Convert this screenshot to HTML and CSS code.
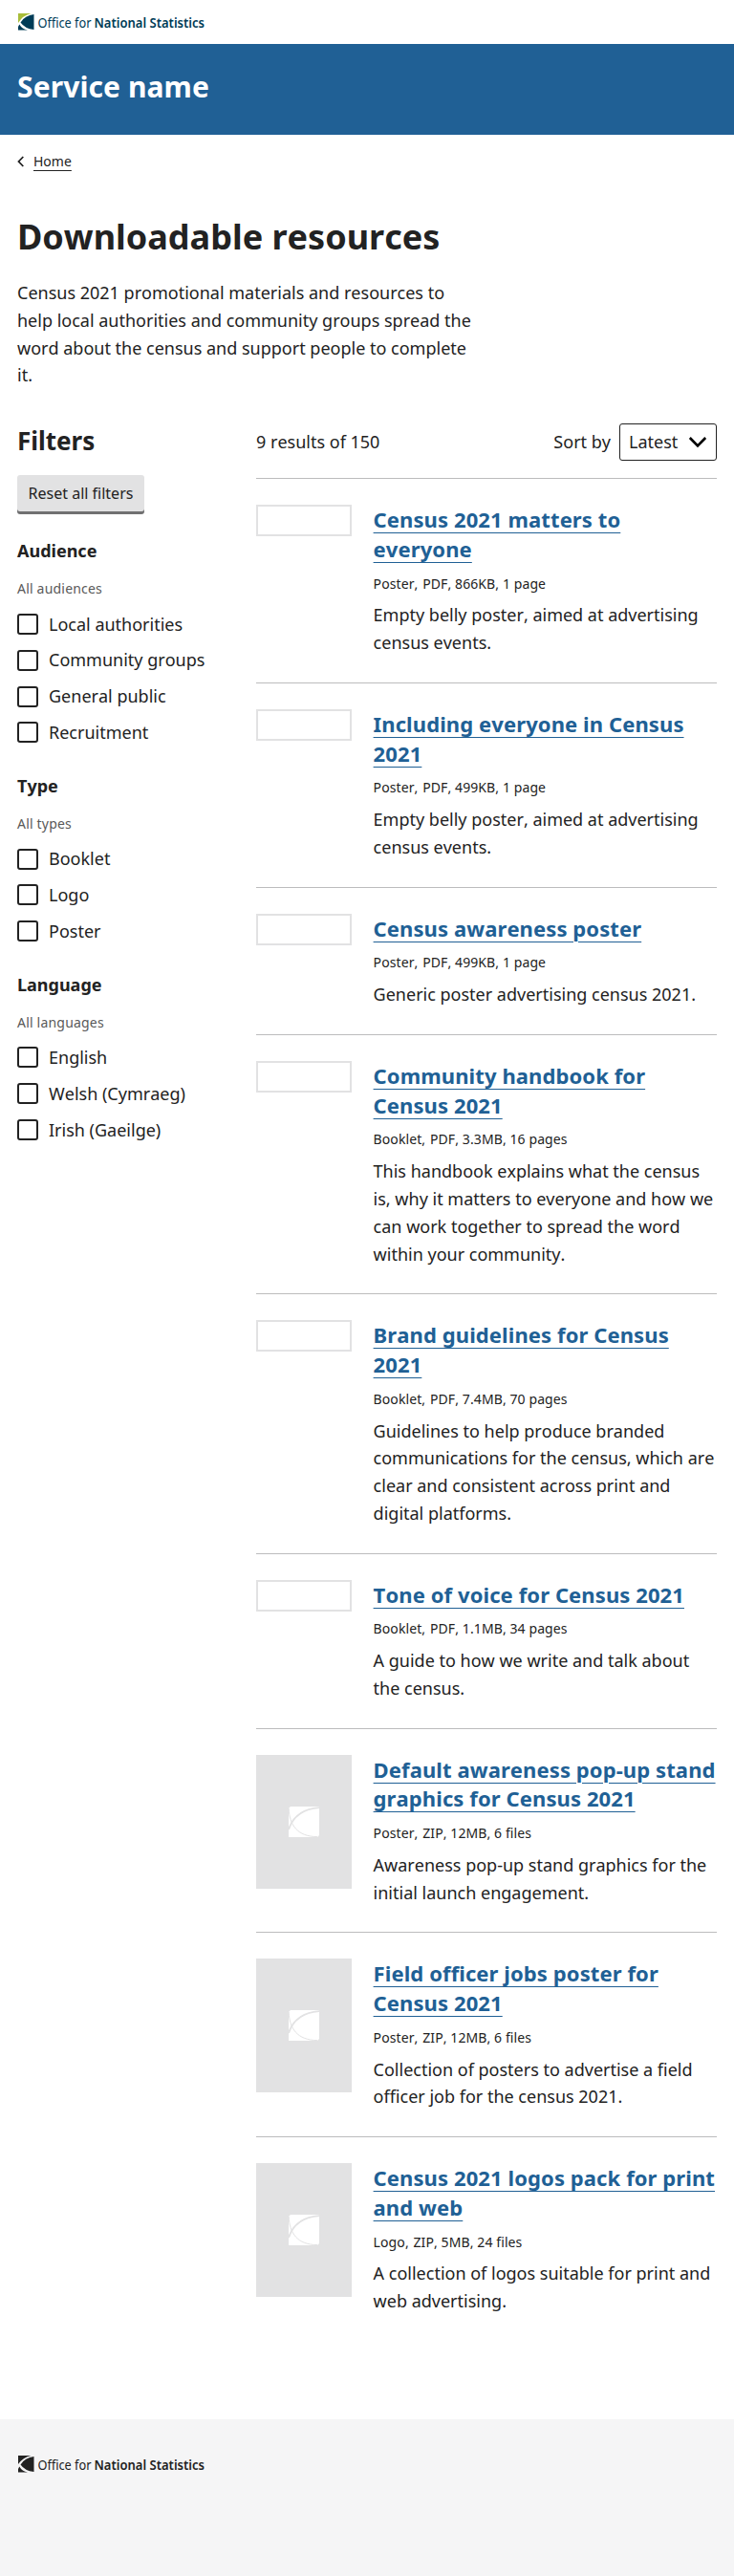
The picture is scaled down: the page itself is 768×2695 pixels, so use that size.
FILE: index.html
```html
<!DOCTYPE html>
<html lang="en">
<head>
<meta charset="utf-8">
<title>Downloadable resources</title>
<link rel="stylesheet" href="styles.css">
</head>
<body>
<svg class="defs" width="0" height="0" aria-hidden="true">
  <symbol id="placeholder" viewBox="0 0 32 32">
    <path fill="#fff" d="M2 0H32V30L30 32H0V2Z"/>
    <path fill="none" stroke="#e2e2e3" stroke-width="1.900" d="M33 1.100C17 2 5 9 0 24"/>
    <path fill="none" stroke="#e2e2e3" stroke-width="1" d="M0.200 2C0.800 19 9 31.500 30 31.600"/>
  </symbol>
</svg>
<header>
  <div class="topbar">
    <svg class="logo" width="200" height="24" viewBox="0 0 200 24" role="img" aria-label="Office for National Statistics">
      <path fill="#a8bd3a" d="M1 3H14.500Q6 5 1 13Z"/>
      <path fill="#003c57" d="M17.500 4V20Q8 19 3.500 12.500Q8 5 17.500 4Z"/>
      <path fill="#003c57" d="M2.300 14.500Q5 19.500 11 20.600H1V17Z"/>
      <text class="logo-text" transform="translate(21.500 17.500) scale(.85 1)">Office for</text>
      <text class="logo-text strong" transform="translate(80.500 17.500) scale(.87 1)">National Statistics</text>
    </svg>
  </div>
  <div class="band"><div class="service">Service name</div></div>
</header>
<nav class="crumbs">
  <svg width="8" height="12" viewBox="0 0 8 12"><path d="M6.300 1L1.500 6L6.300 11" fill="none" stroke="#222" stroke-width="1.800"/></svg>
  <a href="#">Home</a>
</nav>
<main>
  <h1>Downloadable resources</h1>
  <p class="lead">Census 2021 promotional materials and resources to<br>help local authorities and community groups spread the word about the census and support people to complete it.</p>
  <div class="columns">
    <aside>
      <h2 class="filters-title">Filters</h2>
      <button class="reset">Reset all filters</button>
      <section class="group">
        <h3>Audience</h3>
        <p class="all">All audiences</p>
        <label><i></i>Local authorities</label>
        <label><i></i>Community groups</label>
        <label><i></i>General public</label>
        <label><i></i>Recruitment</label>
      </section>
      <section class="group">
        <h3>Type</h3>
        <p class="all">All types</p>
        <label><i></i>Booklet</label>
        <label><i></i>Logo</label>
        <label><i></i>Poster</label>
      </section>
      <section class="group">
        <h3>Language</h3>
        <p class="all">All languages</p>
        <label><i></i>English</label>
        <label><i></i>Welsh (Cymraeg)</label>
        <label><i></i>Irish (Gaeilge)</label>
      </section>
    </aside>
    <div class="results">
      <div class="bar">
        <span>9 results of 150</span>
        <span class="sort">Sort by
          <span class="select">Latest
            <svg width="20" height="14" viewBox="0 0 20 14"><path d="M1.800 2L10 10.500L18.200 2" fill="none" stroke="#000" stroke-width="2.600"/></svg>
          </span>
        </span>
      </div>
      <article><div class="thumb"></div><div><h2><a href="#">Census 2021 matters to everyone</a></h2><p class="meta">Poster, <span>PDF, 866KB, 1 page</span></p><p>Empty belly poster, aimed at advertising census events.</p></div></article>
      <article><div class="thumb"></div><div><h2><a href="#">Including everyone in Census 2021</a></h2><p class="meta">Poster, <span>PDF, 499KB, 1 page</span></p><p>Empty belly poster, aimed at advertising census events.</p></div></article>
      <article><div class="thumb"></div><div><h2><a href="#">Census awareness poster</a></h2><p class="meta">Poster, <span>PDF, 499KB, 1 page</span></p><p>Generic poster advertising census 2021.</p></div></article>
      <article><div class="thumb"></div><div><h2><a href="#">Community handbook for Census 2021</a></h2><p class="meta">Booklet, <span>PDF, 3.3MB, 16 pages</span></p><p>This handbook explains what the census is, why it matters to everyone and how we can work together to spread the word within your community.</p></div></article>
      <article><div class="thumb"></div><div><h2><a href="#">Brand guidelines for Census 2021</a></h2><p class="meta">Booklet, <span>PDF, 7.4MB, 70 pages</span></p><p>Guidelines to help produce branded communications for the census, which are clear and consistent across print and digital platforms.</p></div></article>
      <article><div class="thumb"></div><div><h2><a href="#">Tone of voice for Census 2021</a></h2><p class="meta">Booklet, <span>PDF, 1.1MB, 34 pages</span></p><p>A guide to how we write and talk about the census.</p></div></article>
      <article><div class="thumb blank"><svg width="32" height="32"><use href="#placeholder"/></svg></div><div><h2><a href="#">Default awareness pop-up stand graphics for Census 2021</a></h2><p class="meta">Poster, <span>ZIP, 12MB, 6 files</span></p><p>Awareness pop-up stand graphics for the initial launch engagement.</p></div></article>
      <article><div class="thumb blank"><svg width="32" height="32"><use href="#placeholder"/></svg></div><div><h2><a href="#">Field officer jobs poster for Census 2021</a></h2><p class="meta">Poster, <span>ZIP, 12MB, 6 files</span></p><p>Collection of posters to advertise a field officer job for the census 2021.</p></div></article>
      <article><div class="thumb blank"><svg width="32" height="32"><use href="#placeholder"/></svg></div><div><h2><a href="#">Census 2021 logos pack for print and web</a></h2><p class="meta">Logo, <span>ZIP, 5MB, 24 files</span></p><p>A collection of logos suitable for print and web advertising.</p></div></article>
    </div>
  </div>
</main>
<footer>
  <svg class="logo mono" width="200" height="24" viewBox="0 0 200 24" role="img" aria-label="Office for National Statistics">
    <path d="M1 3H14.500Q6 5 1 12Z"/>
    <path d="M17.500 4V20Q8 19 3.500 12.500Q8 5 17.500 4Z"/>
    <path d="M2.300 14.500Q5 19.500 11 20.600H1V17Z"/>
    <text class="logo-text" transform="translate(21.500 17.500) scale(.85 1)">Office for</text>
    <text class="logo-text strong" transform="translate(80.500 17.500) scale(.87 1)">National Statistics</text>
  </svg>
</footer>
</body>
</html>
```
FILE: styles.css
```css
* { box-sizing: border-box; }
body {
  margin: 0;
  min-height: 2695px;
  display: flex;
  flex-direction: column;
  font: 18px/28.8px "Noto Sans", sans-serif;
  font-kerning: none;
  color: #222;
  background: #fff;
}
h1, h2, h3, p { margin: 0; }
.defs { position: absolute; }
.topbar { height: 46px; padding: 11px 18px 0; }
.logo { display: block; }
.logo-text { font-family: "Noto Sans", sans-serif; font-size: 15px; fill: #003c57; }
.logo-text.strong { font-weight: 600; }
.mono, .mono .logo-text { fill: #222; }
.band { height: 95px; padding: 0 18px; background: #206095; color: #fff; }
.service { padding-top: 24px; font-size: 30px; line-height: 42px; font-weight: 700; letter-spacing: 0.1px; }
.crumbs {
  display: flex;
  align-items: center;
  gap: 9px;
  height: 22px;
  margin: 17px 18px 0;
  font-size: 14px;
  line-height: 22px;
}
.crumbs a { color: #222; text-underline-offset: 4px; text-decoration-thickness: 1px; }
main { padding: 0 18px; }
h1 { margin-top: 43px; font-size: 36px; line-height: 50px; font-weight: 700; }
.lead { width: 488px; margin-top: 19px; }
.columns { display: grid; grid-template-columns: 232px 482px; gap: 18px; margin-top: 36px; }
.filters-title { font-size: 26px; line-height: 36px; margin-bottom: 18px; }
.reset {
  display: block;
  width: 133px;
  height: 38px;
  border: 0;
  border-radius: 3px;
  background: #e2e2e3;
  box-shadow: 0 3px 0 #707071;
  color: #222;
  font: 16px/36px "Noto Sans", sans-serif;
  padding: 0;
}
.group { margin-top: 27px; }
h3 { font-size: 18px; line-height: 28.8px; font-weight: 700; }
.all { margin: 14.400px 0 10.800px; font-size: 14px; line-height: 22.4px; letter-spacing: 0.2px; color: #595959; }
label { display: flex; align-items: center; gap: 11px; height: 28.800px; margin-bottom: 9px; }
label i { width: 22px; height: 22px; border: 2px solid #222; border-radius: 3px; }
.bar { display: flex; justify-content: space-between; align-items: center; height: 39px; margin: 0 0 18px; }
.sort { display: flex; align-items: center; gap: 9px; }
.select {
  display: flex;
  align-items: center;
  justify-content: space-between;
  width: 102px;
  height: 39px;
  padding: 0 9px 0 9px;
  border: 1px solid #222;
  border-radius: 3px;
}
article {
  display: grid;
  grid-template-columns: 100px 1fr;
  column-gap: 22.600px;
  align-items: start;
  border-top: 1px solid #bcbcbd;
  padding: 27px 0;
}
.thumb { height: 33px; border: 2px solid #e2e2e3; }
.blank { display: flex; align-items: center; justify-content: center; height: 140px; background: #e2e2e3; }
article h2 { font-size: 22px; line-height: 30.800px; font-weight: 700; letter-spacing: 0.1px; margin-bottom: 9.900px; }
article h2 a { color: #206095; text-underline-offset: 5px; text-decoration-thickness: 1px; }
.meta { font-size: 14px; line-height: 22.400px; letter-spacing: 0.1px; margin-bottom: 7.300px; }
.meta span { margin-left: 1px; }
footer { flex: 1; margin-top: 81.800px; padding: 35px 18px 0; background: #f5f5f6; }
```
